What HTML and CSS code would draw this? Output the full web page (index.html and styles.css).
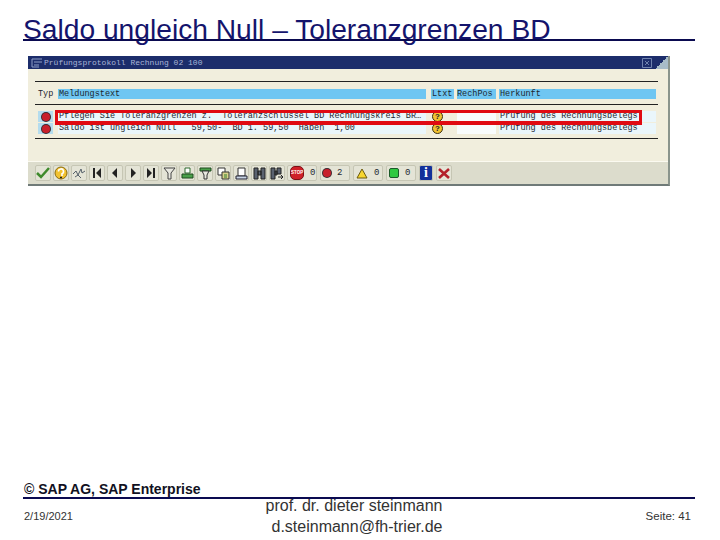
FILE: index.html
```html
<!DOCTYPE html>
<html lang="de">
<head>
	<meta charset="UTF-8">
	<title>Saldo ungleich Null – Toleranzgrenzen BD</title>
	<link rel="stylesheet" href="styles.css">
</head>
<body>
	<div class="slide">
		<h1 class="slide-title">Saldo ungleich Null – Toleranzgrenzen BD</h1>

		<div class="sap-window">
			<div class="titlebar">
				<svg class="titlebar-icon" width="12" height="10" viewBox="0 0 12 10"><path d="M1 1h10M1 1v8h7M3 4h8M3 7h5" fill="none" stroke="#8fa0c8"/></svg>
				<span>Prüfungsprotokoll Rechnung 02 100</span>
				<svg class="titlebar-close" width="10" height="10" viewBox="0 0 10 10"><path d="M.5.5h9v9h-9zM3 3l4 4M7 3L3 7" fill="none" stroke="#6f82ae"/></svg>
				<span class="titlebar-corner"></span>
			</div>

			<div class="protocol">
				<div class="table-head">
					<span class="col-type">Typ</span>
					<span class="col-text cell-blue">Meldungstext</span>
					<span class="col-ltx cell-blue">Ltxt</span>
					<span class="col-pos cell-blue">RechPos</span>
					<span class="col-origin cell-blue">Herkunft</span>
				</div>
				<div class="table-body">
					<div class="table-row">
						<span class="col-type"><span class="cell-icon"><span class="led"></span></span></span>
						<span class="col-text">Pflegen Sie Toleranzgrenzen z.  Toleranzschlüssel BD Rechnungskreis BR…</span>
						<span class="col-ltx"><span class="help-dot">?</span></span>
						<span class="col-pos"></span>
						<span class="col-origin">Prüfung des Rechnungsbelegs</span>
					</div>
					<div class="table-row">
						<span class="col-type"><span class="cell-icon"><span class="led"></span></span></span>
						<span class="col-text">Saldo ist ungleich Null   59,50-  BD 1. 59,50  Haben  1,00</span>
						<span class="col-ltx"><span class="help-dot">?</span></span>
						<span class="col-pos"></span>
						<span class="col-origin">Prüfung des Rechnungsbelegs</span>
					</div>
					<div class="row-highlight"></div>
				</div>
			</div>

			<div class="toolbar">
				<span class="tool"><svg width="14" height="12" viewBox="0 0 14 12"><path d="M1 6l4 4 8-9" fill="none" stroke="#3f8a2c" stroke-width="2.5"/></svg></span>
				<span class="tool"><svg width="14" height="14" viewBox="0 0 14 14"><circle cx="7" cy="7" r="6" fill="#f2c230" stroke="#8a6a10"/><path d="M4.5 5.5a2.5 2.5 0 1 1 3.5 2.2V10" fill="none" stroke="#fff" stroke-width="1.6"/><path d="M6 11.5h2" stroke="#222" stroke-width="1.5"/></svg></span>
				<span class="tool"><svg width="14" height="12" viewBox="0 0 14 12"><path d="M1 7l3-3 2 4 3-6 1 4 3-2M3 10l3-2 3 3" fill="none" stroke="#55606a"/></svg></span>
				<span class="tool"><svg width="10" height="10" viewBox="0 0 10 10"><path d="M1 0h2v10H1zM9 0v10L4 5z" fill="#222"/></svg></span>
				<span class="tool"><svg width="10" height="10" viewBox="0 0 10 10"><path d="M7 0v10L2 5z" fill="#222"/></svg></span>
				<span class="tool"><svg width="10" height="10" viewBox="0 0 10 10"><path d="M3 0v10l5-5z" fill="#222"/></svg></span>
				<span class="tool"><svg width="10" height="10" viewBox="0 0 10 10"><path d="M1 0v10l5-5zM7 0h2v10H7z" fill="#222"/></svg></span>
				<span class="tool"><svg width="13" height="13" viewBox="0 0 13 13"><path d="M1 1h11L8 6v6H5V6z" fill="#e8e8e0" stroke="#444"/></svg></span>
				<span class="tool"><svg width="13" height="13" viewBox="0 0 13 13"><path d="M4 1h5v5H4z" fill="#fff" stroke="#2f6b2f"/><path d="M1 7h11v4H1z" fill="#4aa04a" stroke="#1f4a1f"/></svg></span>
				<span class="tool"><svg width="13" height="13" viewBox="0 0 13 13"><path d="M1 1h11v3H1z" fill="#4aa04a" stroke="#1f4a1f"/><path d="M3 4h7L8 8v4H5V8z" fill="#e8e8e0" stroke="#333"/></svg></span>
				<span class="tool"><svg width="13" height="13" viewBox="0 0 13 13"><path d="M1 1h7v7H1z" fill="#fff" stroke="#333"/><path d="M5 5h7v7H5z" fill="#d9d38a" stroke="#333"/><path d="M7 8h3M7 10h3" stroke="#2f7a2f"/></svg></span>
				<span class="tool"><svg width="13" height="13" viewBox="0 0 13 13"><path d="M3 1h7v8H3z" fill="#fff" stroke="#333"/><path d="M1 9h11v3H1z" fill="#c8d4e4" stroke="#223"/></svg></span>
				<span class="tool"><svg width="13" height="13" viewBox="0 0 13 13"><path d="M1 1h4v11H1zM8 1h4v11H8zM5 4h3v4H5z" fill="#5a6270" stroke="#222"/></svg></span>
				<span class="tool"><svg width="14" height="13" viewBox="0 0 14 13"><path d="M1 1h4v11H1zM7 1h4v6H7zM5 4h2v4H5z" fill="#5a6270" stroke="#222"/><path d="M8 10h5M11 8l2 2-2 2" fill="none" stroke="#222"/></svg></span>
				<span class="tool tool-count"><span class="stop-sign">STOP</span><span>0</span></span>
				<span class="tool tool-count"><span class="led"></span><span>2</span></span>
				<span class="tool tool-count"><svg width="12" height="11" viewBox="0 0 12 11"><path d="M6 1l5 9H1z" fill="#f7d630" stroke="#6a5a10"/></svg><span>0</span></span>
				<span class="tool tool-count"><span class="green-light"></span><span>0</span></span>
				<span class="tool tool-info">i</span>
				<span class="tool"><svg width="12" height="11" viewBox="0 0 12 11"><path d="M1 1l10 9M11 1L1 10" stroke="#b3202a" stroke-width="2.6"/></svg></span>
			</div>
		</div>

		<div class="slide-spacer"></div>

		<div class="copyright">© SAP AG, SAP Enterprise</div>
		<div class="slide-footer">
			<span class="footer-date">2/19/2021</span>
			<span class="footer-author">prof. dr. dieter steinmann<br>d.steinmann@fh-trier.de</span>
			<span class="footer-page">Seite: 41</span>
		</div>
	</div>
</body>
</html>
```

FILE: styles.css
```css
* {
	margin: 0;
	padding: 0;
	box-sizing: border-box;
}

body {
	background: #ffffff;
	font-family: "Liberation Sans", Arial, sans-serif;
}

.slide {
	display: flex;
	flex-direction: column;
	width: 720px;
	height: 540px;
	padding: 14px 25px 6px 23px;
	overflow: hidden;
}

.slide-title {
	height: 27px;
	border-bottom: 2px solid #0a0a50;
	color: #14146c;
	font-size: 28.2px;
	font-weight: normal;
	line-height: 31px;
	white-space: nowrap;
}

/* SAP dialog */
.sap-window {
	width: 642px;
	height: 130px;
	margin: 15px 0 0 5px;
	display: flex;
	flex-direction: column;
	border-right: 2px solid #8a948c;
	border-bottom: 2px solid #6f7a78;
	background: #f1eedd;
	font-family: "Liberation Mono", monospace;
	font-size: 8.5px;
	color: #1c2630;
}

.titlebar {
	position: relative;
	display: flex;
	align-items: center;
	flex: none;
	height: 13px;
	padding-left: 3px;
	background: #1c2d6b;
	color: #aab6d8;
	font-size: 8px;
	white-space: pre;
}

.titlebar-icon {
	margin-right: 1px;
}

.titlebar-close {
	margin-left: auto;
	margin-right: 16px;
}

.titlebar-corner {
	position: absolute;
	top: 0;
	right: 0;
	width: 13px;
	height: 13px;
	background: linear-gradient(135deg, #1c2d6b 50%, #a8bcc8 50%);
}

.protocol {
	flex: 1;
	margin: 12px 10px 0 7px;
}

.table-head {
	display: flex;
	align-items: center;
	height: 24px;
	padding: 2px 2px 0 3px;
	border-top: 1px solid #222222;
	border-bottom: 1px solid #222222;
}

.table-head > span {
	height: 10px;
	line-height: 10px;
}

.cell-blue {
	background: #6fc6f2;
}

.col-type {
	width: 20px;
	flex: none;
}

.col-text {
	width: 368px;
	margin-right: 5px;
	flex: none;
	padding-left: 1px;
	overflow: hidden;
	white-space: pre;
}

.col-ltx {
	width: 23px;
	margin-right: 3px;
	padding-left: 1px;
	flex: none;
}

.col-pos {
	width: 39px;
	margin-right: 3px;
	flex: none;
}

.col-origin {
	flex: 1;
	padding-left: 1px;
	white-space: nowrap;
	overflow: hidden;
}

.table-body {
	position: relative;
	display: flex;
	flex-direction: column;
	gap: 1px;
	height: 34px;
	padding: 6px 2px 0 3px;
	border-bottom: 1px solid #222222;
}

.table-row {
	display: flex;
	align-items: center;
	height: 11px;
	line-height: 11px;
}

.table-row .col-text,
.table-row .col-origin {
	background: #eaf6fb;
}

.table-row .col-pos {
	height: 11px;
	background: #f8fcfd;
}

.cell-icon {
	display: flex;
	align-items: center;
	justify-content: center;
	width: 15px;
	height: 11px;
	background: #b4dcee;
}

.led {
	display: block;
	width: 8px;
	height: 8px;
	border-radius: 50%;
	background: #c8202c;
	box-shadow: 0 0 0 1px #3a2a30;
}

.help-dot {
	display: block;
	width: 11px;
	height: 11px;
	border: 1px solid #3a3010;
	border-radius: 50%;
	background: #f2c230;
	font-size: 8px;
	font-weight: bold;
	line-height: 9px;
	text-align: center;
}

.row-highlight {
	position: absolute;
	top: 5px;
	left: 20px;
	width: 587px;
	height: 15px;
	border: 3px solid #e00a12;
	border-bottom-width: 4px;
}

/* bottom toolbar */
.toolbar {
	display: flex;
	align-items: center;
	gap: 2px;
	flex: none;
	height: 23px;
	padding-left: 7px;
	border-top: 1px solid #fbfaf0;
	background: #dcdccc;
}

.tool {
	display: flex;
	align-items: center;
	justify-content: center;
	flex: none;
	width: 16px;
	height: 16px;
	border: 1px solid #c6c6b4;
	border-radius: 2px;
	background: #e4e4d6;
}

.tool-count {
	gap: 6px;
	width: 30px;
	margin-right: 1px;
	padding: 0 2px;
	justify-content: flex-start;
	font-size: 9px;
}

.stop-sign {
	flex: none;
	width: 14px;
	height: 14px;
	border: 1px solid #7a1016;
	border-radius: 5px;
	background: #cf2028;
	color: #ffffff;
	font-family: "Liberation Sans", sans-serif;
	font-size: 4.5px;
	font-weight: bold;
	line-height: 12px;
	text-align: center;
}

.green-light {
	width: 10px;
	height: 10px;
	border: 1px solid #1c5a2a;
	border-radius: 2px;
	background: #30c840;
}

.tool-info {
	width: 14px;
	margin-right: 1px;
	background: #12309a;
	color: #ffffff;
	font-family: "Liberation Serif", serif;
	font-size: 14px;
	font-weight: bold;
}

.slide-spacer {
	flex: 1;
}

/* footer */
.copyright {
	height: 15px;
	padding-left: 1px;
	color: #111122;
	font-size: 14px;
	font-weight: bold;
	line-height: 15px;
	white-space: nowrap;
}

/* the author lines are taller than the row and spill over both edges */
.slide-footer {
	display: grid;
	grid-template-columns: 1fr auto 1fr;
	grid-template-rows: 33px;
	align-items: center;
	height: 37px;
	border-top: 2px solid #0a0a50;
	color: #333333;
}

.footer-date {
	padding-left: 1px;
	font-size: 11px;
}

.footer-author {
	margin-right: 10px;
	font-size: 16px;
	line-height: 21px;
	text-align: right;
}

.footer-page {
	padding-right: 4px;
	font-size: 11.5px;
	text-align: right;
}
```
